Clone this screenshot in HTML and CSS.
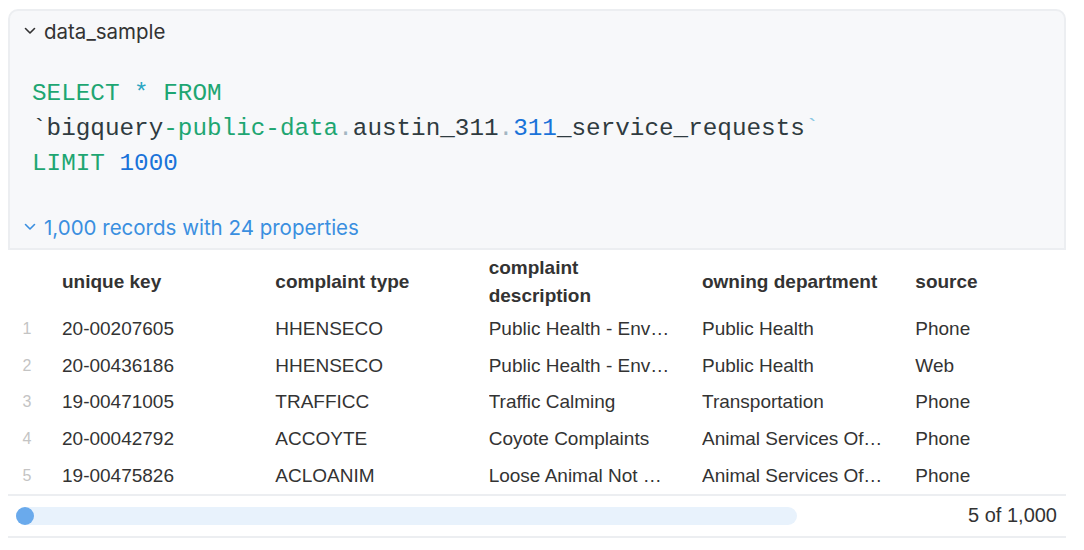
FILE: index.html
```html
<!DOCTYPE html>
<html>
<head>
<meta charset="utf-8">
<link rel="stylesheet" href="styles.css">
</head>
<body>
<div class="wrap">
  <div class="card">
    <div class="card-head">
      <svg class="chev" width="12" height="8" viewBox="0 0 12 8"><polyline points="1.5,1.5 6,6 10.5,1.5" fill="none" stroke="#333" stroke-width="1.6" stroke-linecap="round" stroke-linejoin="round"/></svg>
      <span class="title">data_sample</span>
    </div>
    <pre class="code"><span class="kw">SELECT</span> <span class="op">*</span> <span class="kw">FROM</span>
<span class="id">`bigquery</span><span class="kw">-public-data</span><span class="dot">.</span><span class="id">austin_311</span><span class="dot">.</span><span class="num">311</span><span class="id">_service_requests</span><span class="tick">`</span>
<span class="kw">LIMIT</span> <span class="num">1000</span></pre>
    <div class="records">
      <svg class="chev" width="12" height="8" viewBox="0 0 12 8"><polyline points="1.5,1.5 6,6 10.5,1.5" fill="none" stroke="#3a8fe0" stroke-width="1.6" stroke-linecap="round" stroke-linejoin="round"/></svg>
      <span>1,000 records with 24 properties</span>
    </div>
  </div>
  <div class="grid">
    <div class="row head">
      <div class="idx"></div>
      <div class="cell">unique key</div>
      <div class="cell">complaint type</div>
      <div class="cell wrapc">complaint description</div>
      <div class="cell">owning department</div>
      <div class="cell">source</div>
    </div>
    <div class="row">
      <div class="idx">1</div>
      <div class="cell">20-00207605</div>
      <div class="cell">HHENSECO</div>
      <div class="cell">Public Health - Environmental Services</div>
      <div class="cell">Public Health</div>
      <div class="cell">Phone</div>
    </div>
    <div class="row">
      <div class="idx">2</div>
      <div class="cell">20-00436186</div>
      <div class="cell">HHENSECO</div>
      <div class="cell">Public Health - Environmental Services</div>
      <div class="cell">Public Health</div>
      <div class="cell">Web</div>
    </div>
    <div class="row">
      <div class="idx">3</div>
      <div class="cell">19-00471005</div>
      <div class="cell">TRAFFICC</div>
      <div class="cell">Traffic Calming</div>
      <div class="cell">Transportation</div>
      <div class="cell">Phone</div>
    </div>
    <div class="row">
      <div class="idx">4</div>
      <div class="cell">20-00042792</div>
      <div class="cell">ACCOYTE</div>
      <div class="cell">Coyote Complaints</div>
      <div class="cell">Animal Services Office</div>
      <div class="cell">Phone</div>
    </div>
    <div class="row">
      <div class="idx">5</div>
      <div class="cell">19-00475826</div>
      <div class="cell">ACLOANIM</div>
      <div class="cell">Loose Animal Not Confined</div>
      <div class="cell">Animal Services Office</div>
      <div class="cell">Phone</div>
    </div>
  </div>
  <div class="foot">
    <div class="track"><div class="thumb"></div></div>
    <div class="count">5 of 1,000</div>
  </div>
</div>
</body>
</html>
```
FILE: styles.css
```css
html, body {
  margin: 0;
  padding: 0;
  background: #ffffff;
}
.wrap {
  padding: 9px 18px 0 8px;
  font-family: "Liberation Sans", Arial, sans-serif;
  color: #333333;
}
.card {
  background: #f7f8fa;
  border: 2px solid #eceef1;
  border-radius: 10px 10px 0 0;
}
.card-head {
  height: 40px;
  display: flex;
  align-items: center;
  padding-left: 14px;
  gap: 8px;
  font-family: Inter, "Noto Sans", sans-serif;
  font-size: 20.5px;
  color: #333333;
}
.chev {
  display: block;
  flex: none;
}
.code {
  margin: 0;
  padding: 25px 22px 0 22px;
  font-family: "Liberation Mono", "Courier New", monospace;
  font-size: 24.3px;
  line-height: 35px;
  color: #2f3b40;
}
.kw { color: #1ea672; }
.op { color: #2aa6c2; }
.num { color: #1a73d9; }
.id { color: #2f3b40; }
.dot { color: #a3b6c2; }
.tick { color: #8cc8e4; }
.records {
  display: flex;
  align-items: center;
  gap: 8px;
  padding: 34px 0 9px 14px;
  height: 24px;
  font-family: Inter, "Noto Sans", sans-serif;
  font-size: 20.5px;
  color: #3a8fe0;
}
.grid {
  font-size: 19px;
  border-bottom: 2px solid #eceef1;
}
.row {
  display: grid;
  grid-template-columns: 54px 213.33px 213.33px 213.33px 213.33px 150.68px;
  height: 36.6px;
  align-items: center;
}
.row.head {
  height: 61px;
  font-weight: bold;
  line-height: 28px;
  padding-top: 2px;
  box-sizing: border-box;
}
.idx {
  color: #c4c4c4;
  font-size: 16px;
  text-align: center;
  padding-right: 16px;
}
.cell {
  white-space: nowrap;
  overflow: hidden;
  text-overflow: ellipsis;
  padding-right: 30px;
}
.wrapc {
  white-space: normal;
}
.foot {
  display: flex;
  align-items: center;
  height: 40px;
  padding: 0 9px 0 8px;
  border-bottom: 2px solid #eceef1;
}
.track {
  width: 781px;
  height: 18px;
  border-radius: 9px;
  background: #e8f2fc;
}
.thumb {
  width: 18px;
  height: 18px;
  border-radius: 50%;
  background: #6aaaec;
}
.count {
  margin-left: auto;
  font-size: 20px;
  color: #333333;
}
```
